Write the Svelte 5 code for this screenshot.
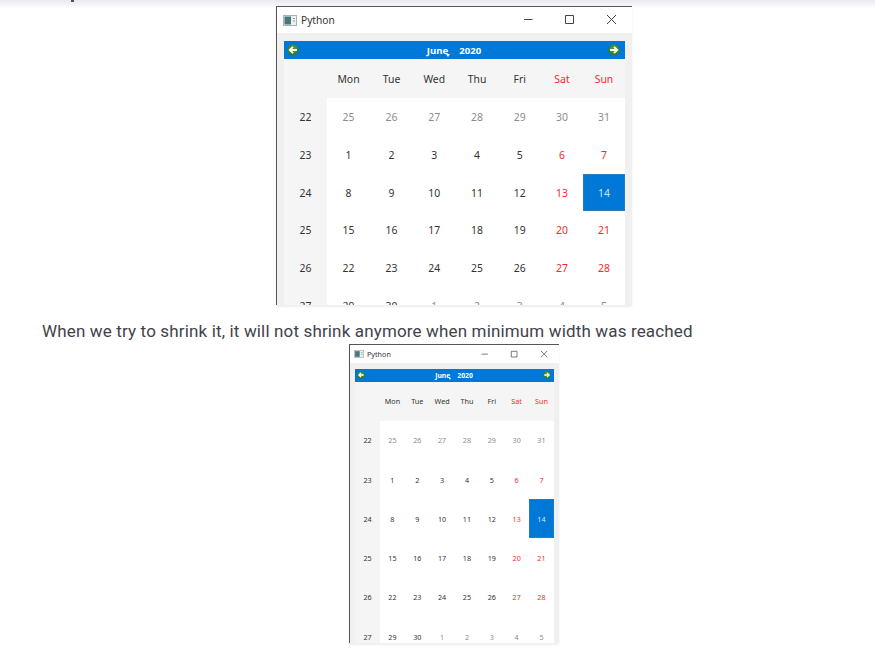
<script>
  const days = ['Mon', 'Tue', 'Wed', 'Thu', 'Fri', 'Sat', 'Sun'];
  const weeks = [
    { n: 22, d: [25, 26, 27, 28, 29, 30, 31] },
    { n: 23, d: [1, 2, 3, 4, 5, 6, 7] },
    { n: 24, d: [8, 9, 10, 11, 12, 13, 14] },
    { n: 25, d: [15, 16, 17, 18, 19, 20, 21] },
    { n: 26, d: [22, 23, 24, 25, 26, 27, 28] },
    { n: 27, d: [29, 30, 1, 2, 3, 4, 5] }
  ];
  const outside = (w, d) => (w === 22) || (w === 27 && d < 10);
</script>

{#snippet arrow(flip)}
  <svg class="arrow" class:flip viewBox="0 0 12 12">
    <circle cx="6" cy="6" r="5.8" fill="#2f7d32" />
    <circle cx="6" cy="5" r="4.3" fill="#5f9d3f" opacity="0.6" />
    <path d="M10 6H3M6 2.8L2.8 6L6 9.2" fill="none" stroke="#fffff0" stroke-width="1.9" />
  </svg>
{/snippet}

{#snippet calendar(kind)}
  <section class="window {kind}">
    <header class="title">
      <svg class="app" viewBox="0 0 14 11">
        <rect x="0.5" y="0.5" width="13" height="10" fill="#eef1f3" stroke="#a9b0b6" />
        <rect x="1.5" y="1.5" width="6.5" height="8" fill="#47797c" />
        <path d="M10 3.5h2M10 6h2" stroke="#8d969d" />
      </svg>
      <span>Python</span>
      <svg class="controls" viewBox="0 0 94 12" fill="none" stroke="#444" stroke-width="1">
        <path d="M1 5.5H9.5M42.5 1.5H50.5V9.5H42.5ZM84 1L93 10M93 1L84 10" />
      </svg>
    </header>
    <div class="body">
      <nav>
        {@render arrow(false)}
        <div class="month"><b class="name">June<i></i></b><b>2020</b></div>
        {@render arrow(true)}
      </nav>
      <div class="grid">
        <span class="side"></span>
        {#each days as d, i}<span class="head" class:red={i > 4}>{d}</span>{/each}
        {#each weeks as w}
          <span class="side">{w.n}</span>
          {#each w.d as d, i}
            <span class:muted={outside(w.n, d)} class:red={i > 4 && !outside(w.n, d)} class:selected={w.n === 24 && d === 14}>{d}</span>
          {/each}
        {/each}
      </div>
    </div>
  </section>
{/snippet}

<main>
  <div class="shade"><i></i></div>
  {@render calendar('wide')}
  <p><span>When we try to shrink it, it will not shrink anymore when minimum width was reached</span></p>
  {@render calendar('narrow')}
</main>

<style>
  :global(body) { background: #fff; overflow: hidden; }
  main { height: 661px; overflow: hidden; box-sizing: border-box; }
  .shade { height: 6px; position: relative; }
  .shade::before { content: ''; position: absolute; inset: 0 0 auto; height: 9px; background: linear-gradient(#e9e9ef, #f4f4f8 50%, #fff); }
  .shade i { position: absolute; left: 71px; top: 0; width: 3px; height: 2px; background: #50505a; }
  .window {
    box-sizing: border-box; overflow: hidden; background: #f0f0f0; color: #333;
    border-top: 1px solid #555; border-left: 1px solid #555;
    box-shadow: 0 2px 2px #eee; position: relative; height: 299px;
    font-family: "Noto Sans", "Open Sans", sans-serif;
  }
  .wide { width: 356px; margin-left: 276px; font-size: 10.4px; }
  .narrow { width: 210px; margin-left: 349px; font-size: 7.2px; }
  .title { display: flex; align-items: center; background: #fff; height: 26px; padding: 0 15px 0 6px; }
  .title span { margin-left: 4px; font-size: 10.2px; line-height: 13px; flex: 1; }
  .app { width: 14px; height: 11px; }
  .controls { width: 94px; height: 12px; }
  .body { padding: 8px 7px 0; }
  nav { display: flex; align-items: center; justify-content: space-between; height: 18px; background: #0078d7; color: #fff; padding: 0 5px 0 3px; }
  .arrow { width: 12px; height: 12px; flex: none; }
  .flip { transform: scaleX(-1); }
  .month { display: flex; gap: 11px; font-size: 9.6px; padding-left: 1px; }
  .name { position: relative; }
  .name i { position: absolute; left: 100%; bottom: 0; margin-left: -2px; border: 2.5px solid transparent; border-top: 3px solid #fff; border-bottom: 0; }
  .grid { display: grid; grid-template-columns: 43px 43px 43px 42.5px 43px 42.5px 42px 42px; grid-template-rows: 39.2px; grid-auto-rows: 37.75px; background: #fff; }
  .grid > span { display: flex; align-items: center; justify-content: center; }
  .grid .side, .grid .head { background: #f5f5f5; }
  .grid .red { color: #f7282c; }
  .grid .muted { color: #8c8c8c; }
  .grid .selected { background: #0078d7; color: #cfe6f8; outline: 1px dotted #4f7fa0; outline-offset: -1px; }
  p { margin: 0; height: 39px; padding: 16px 0 0 42px; box-sizing: border-box; font: 17px/21px Roboto, sans-serif; letter-spacing: 0.15px; color: #42424c; white-space: nowrap; }
  .narrow .title { height: 18px; padding: 0 11px 0 4px; }
  .narrow .title span { font-size: 7.2px; line-height: 9px; margin-left: 3px; }
  .narrow .app { width: 10px; height: 8px; }
  .narrow .controls { width: 67px; height: 9px; }
  .narrow .body { padding: 6px 5px 0; }
  .narrow nav { height: 12.5px; padding: 0 3px 0 2px; }
  .narrow .arrow { width: 8px; height: 8px; }
  .narrow .month { font-size: 6.8px; gap: 7px; padding-left: 0; }
  .narrow .name i { border-width: 2px 1.5px 0; bottom: 0; margin-left: -1px; }
  .narrow .grid { grid-template-columns: 25px repeat(7, 24.85px); grid-template-rows: 39.1px; grid-auto-rows: 39.3px; }
</style>
